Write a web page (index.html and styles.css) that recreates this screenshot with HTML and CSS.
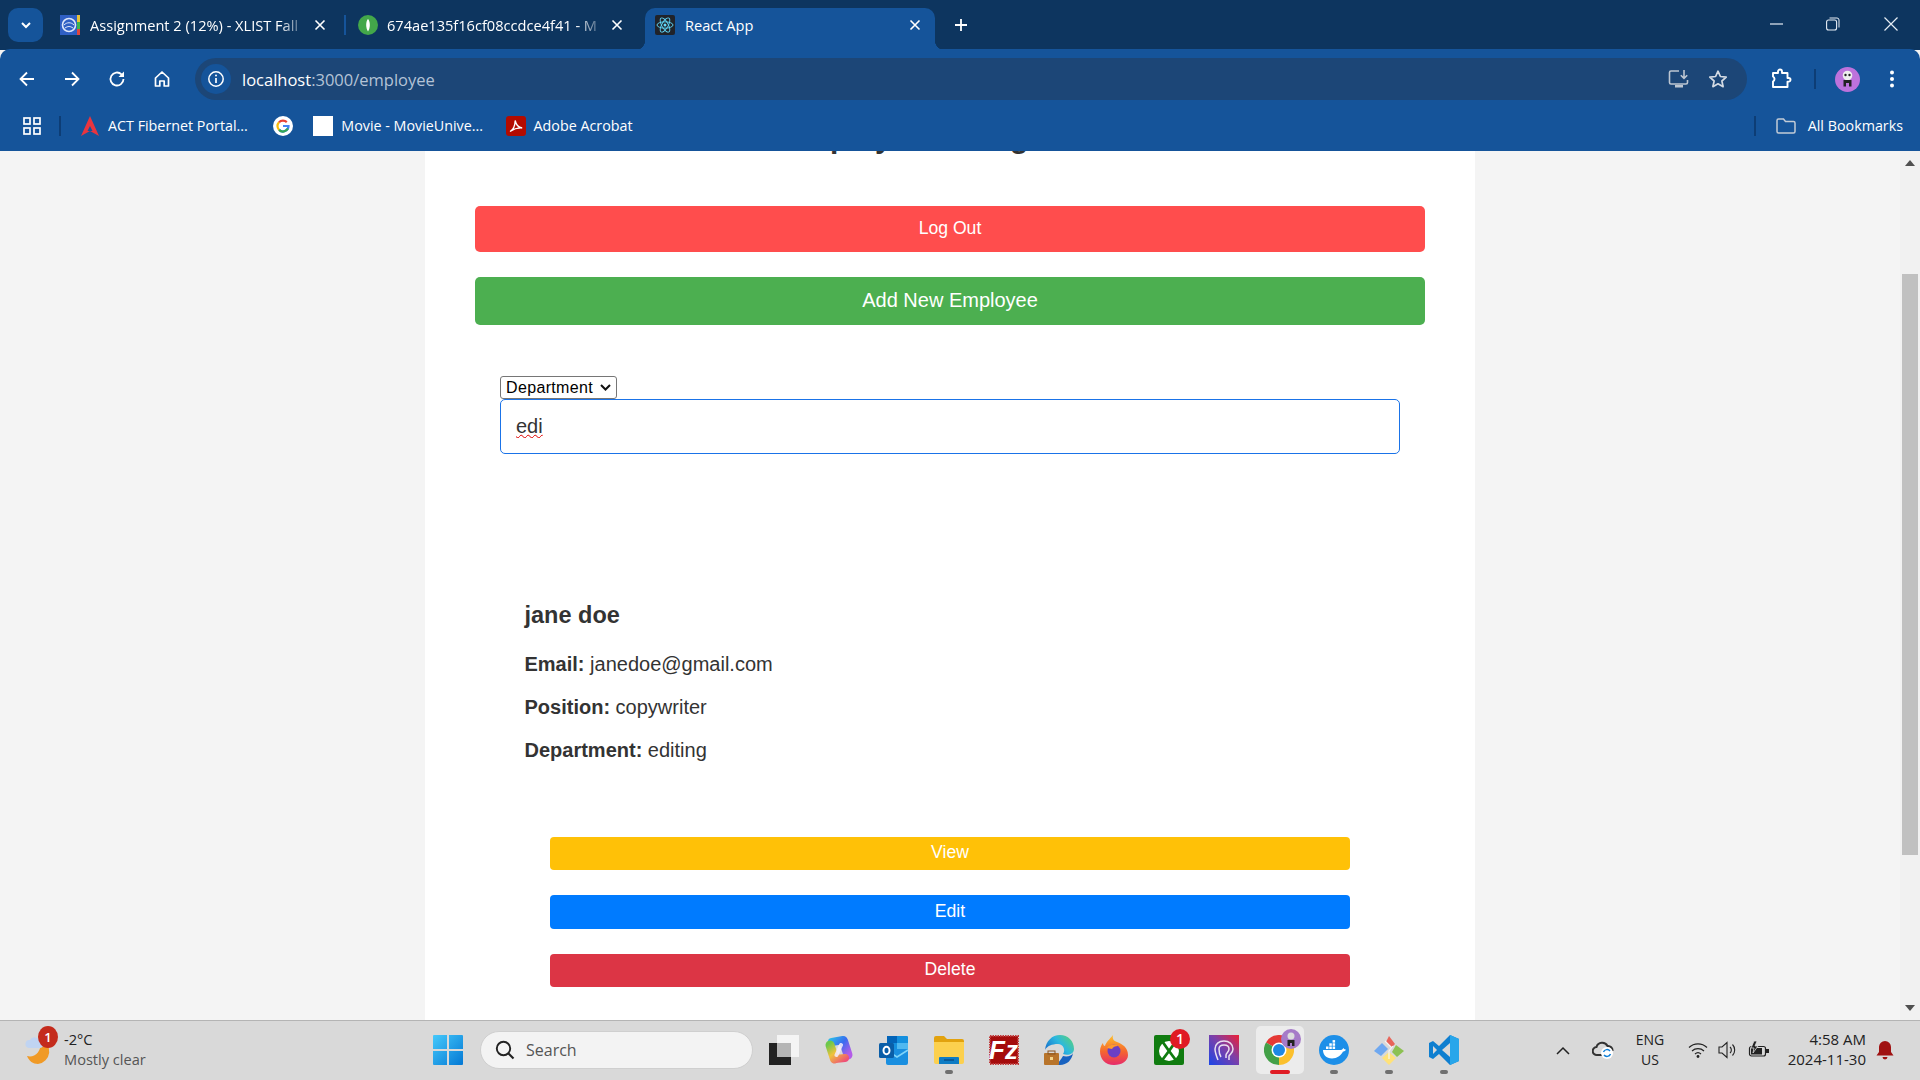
FILE: index.html
```html
<!DOCTYPE html>
<html lang="en">
<head>
    <meta charset="UTF-8">
    <meta name="viewport" content="width=device-width, initial-scale=1.0">
    <title>React App</title>
    <link rel="stylesheet" href="styles.css">
</head>
<body>
    <!-- browser tabs -->
    <div class="tabstrip">
        <div class="tab-search">
            <svg width="14" height="14" viewBox="0 0 14 14"><path d="M3 5l4 4 4-4" fill="none" stroke="#fff" stroke-width="2"/></svg>
        </div>
        <div class="tab tab-first">
            <svg class="favicon" width="20" height="20" viewBox="0 0 20 20"><rect width="20" height="20" fill="#2f5fc4"/><rect x="17" width="3" height="7" fill="#e8c23a"/><rect x="17" y="7" width="3" height="7" fill="#3eb54a"/><rect x="17" y="14" width="3" height="6" fill="#e0463c"/><circle cx="9" cy="10" r="6.5" fill="none" stroke="#dfe8fa" stroke-width="1.6"/><path d="M4 10c3-3 7-3 10 0M5 13c3-2 5-2 8 0" fill="none" stroke="#dfe8fa"/></svg>
            <span class="tab-title">Assignment 2 (12%) - XLIST Fall</span>
            <svg class="tab-close" width="12" height="12" viewBox="0 0 12 12"><path d="M1.5 1.5l9 9M10.5 1.5l-9 9" stroke="#fff" stroke-width="1.6"/></svg>
        </div>
        <div class="tab-sep"></div>
        <div class="tab tab-second">
            <svg class="favicon" width="20" height="20" viewBox="0 0 20 20"><circle cx="10" cy="10" r="10" fill="#43a74a"/><path d="M10 4c2.400 2.400 2.400 9 0 12.500-2.400-3.500-2.400-10.100 0-12.500z" fill="#fff"/></svg>
            <span class="tab-title">674ae135f16cf08ccdce4f41 - M</span>
            <svg class="tab-close" width="12" height="12" viewBox="0 0 12 12"><path d="M1.500 1.500l9 9M10.500 1.500l-9 9" stroke="#fff" stroke-width="1.600"/></svg>
        </div>
        <div class="tab tab-active">
            <svg class="favicon" width="20" height="20" viewBox="0 0 20 20"><rect width="20" height="20" rx="2" fill="#20232a"/><g fill="none" stroke="#61dafb" stroke-width=".9"><ellipse cx="10" cy="10" rx="8" ry="3.200"/><ellipse cx="10" cy="10" rx="8" ry="3.200" transform="rotate(60 10 10)"/><ellipse cx="10" cy="10" rx="8" ry="3.200" transform="rotate(120 10 10)"/></g><circle cx="10" cy="10" r="1.500" fill="#61dafb"/></svg>
            <span class="tab-title">React App</span>
            <svg class="tab-close" width="12" height="12" viewBox="0 0 12 12"><path d="M1.500 1.500l9 9M10.500 1.500l-9 9" stroke="#fff" stroke-width="1.600"/></svg>
        </div>
        <svg class="new-tab" width="14" height="14" viewBox="0 0 14 14"><path d="M7 1v12M1 7h12" stroke="#fff" stroke-width="1.800"/></svg>
        <div class="window-controls">
            <svg width="14" height="14" viewBox="0 0 14 14"><path d="M0 7h13" stroke="#e6edf5" stroke-width="1.200"/></svg>
            <svg width="14" height="14" viewBox="0 0 14 14"><rect x=".6" y="3" width="10" height="10" rx="2" fill="none" stroke="#e6edf5" stroke-width="1.100"/><path d="M3.500 1h7.500a2 2 0 0 1 2 2v7.500" fill="none" stroke="#e6edf5"/></svg>
            <svg width="14" height="14" viewBox="0 0 14 14"><path d="M.5.5l13 13M13.500.5l-13 13" stroke="#e6edf5" stroke-width="1.200"/></svg>
        </div>
    </div>

    <!-- address bar -->
    <div class="toolbar">
        <svg class="nav-icon" width="18" height="18" viewBox="0 0 18 18"><path d="M16 9H3M9 2.500L2.500 9 9 15.500" fill="none" stroke="#fff" stroke-width="1.800"/></svg>
        <svg class="nav-icon" width="18" height="18" viewBox="0 0 18 18"><path d="M2 9h13M9 2.500L15.500 9 9 15.500" fill="none" stroke="#fff" stroke-width="1.800"/></svg>
        <svg class="nav-icon" width="18" height="18" viewBox="0 0 18 18"><path d="M15.500 9a6.500 6.500 0 1 1-2-4.700L15.500 6.300" fill="none" stroke="#fff" stroke-width="1.800"/><path d="M16 1.500V7h-5.500z" fill="#fff"/></svg>
        <svg class="nav-icon" width="18" height="18" viewBox="0 0 18 18"><path d="M2.500 8L9 2l6.500 6v8h-4.300v-5H6.800v5H2.500z" fill="none" stroke="#fff" stroke-width="1.700" stroke-linejoin="round"/></svg>
        <div class="address-bar">
            <div class="site-info">
                <svg width="18" height="18" viewBox="0 0 18 18"><circle cx="9" cy="9" r="7.200" fill="none" stroke="#fff" stroke-width="1.500"/><path d="M9 8v5" stroke="#fff" stroke-width="1.700"/><circle cx="9" cy="5.500" r="1" fill="#fff"/></svg>
            </div>
            <span class="url">localhost<span class="url-path">:3000/employee</span></span>
            <svg class="install-icon" width="22" height="20" viewBox="0 0 22 20"><path d="M11 2H3a1.500 1.500 0 0 0-1.500 1.500v10A1.500 1.500 0 0 0 3 15h15a1.500 1.500 0 0 0 1.500-1.500V11" fill="none" stroke="#bcc6d2" stroke-width="1.600"/><path d="M7 16h8v2.500H7z" fill="#bcc6d2"/><path d="M16 1v8M12.800 6.200L16 9.400l3.200-3.200" fill="none" stroke="#bcc6d2" stroke-width="1.600"/></svg>
            <svg class="star-icon" width="20" height="20" viewBox="0 0 20 20"><path d="M10 2.200l2.400 5.300 5.800.6-4.300 3.900 1.200 5.700-5.100-2.900-5.100 2.900 1.200-5.700L1.800 8.100l5.800-.6z" fill="none" stroke="#d4dbe4" stroke-width="1.700" stroke-linejoin="round"/></svg>
        </div>
        <svg class="ext-icon" width="22" height="22" viewBox="0 0 22 22"><path d="M3 5h5V3.500a2 2 0 0 1 4 0V5h5.500v5h1.200a1.800 1.800 0 0 1 0 3.600h-1.200V19H3v-5.500a3 3 0 0 0 1.500-2.600A3 3 0 0 0 3 8.500z" fill="none" stroke="#fff" stroke-width="1.900" stroke-linejoin="round"/></svg>
        <div class="toolbar-sep"></div>
        <div class="avatar">
            <svg width="25" height="25" viewBox="0 0 25 25"><circle cx="12.500" cy="12.500" r="12.500" fill="#bd72dc"/><circle cx="12.500" cy="8.500" r="4.800" fill="#eee"/><circle cx="10.500" cy="8" r="1.200" fill="#222"/><circle cx="14.500" cy="8" r="1.200" fill="#222"/><path d="M8.500 13h8v6.500h-2.500v-3.500h-3v3.500H8.500z" fill="#222"/></svg>
        </div>
        <svg class="kebab" width="6" height="18" viewBox="0 0 6 18"><circle cx="3" cy="2.500" r="2" fill="#fff"/><circle cx="3" cy="9" r="2" fill="#fff"/><circle cx="3" cy="15.500" r="2" fill="#fff"/></svg>
    </div>

    <!-- bookmarks -->
    <div class="bookmarks">
        <svg class="apps-icon" width="18" height="18" viewBox="0 0 18 18"><g fill="none" stroke="#fff" stroke-width="1.700"><rect x="1" y="1" width="6" height="6"/><rect x="11" y="1" width="6" height="6"/><rect x="1" y="11" width="6" height="6"/><rect x="11" y="11" width="6" height="6"/></g></svg>
        <div class="bookmark-sep"></div>
        <div class="bookmark bookmark-act">
            <svg width="20" height="20" viewBox="0 0 20 20"><path d="M10 0l9 20-9-5-9 5z" fill="#e8353f"/><path d="M10 10l2.500 5h-5z" fill="#15549a"/></svg>
            <span>ACT Fibernet Portal...</span>
        </div>
        <svg class="google-icon" width="20" height="20" viewBox="0 0 20 20"><circle cx="10" cy="10" r="10" fill="#fff"/><path d="M10 10h5.500a5.500 5.500 0 0 1-9.400 3.900" fill="none" stroke="#4285f4" stroke-width="2.200"/><path d="M6.100 13.900a5.500 5.500 0 0 1-.1-7.700" fill="none" stroke="#fbbc05" stroke-width="2.200"/><path d="M6 6.200a5.500 5.500 0 0 1 7.800-.1" fill="none" stroke="#ea4335" stroke-width="2.200"/><path d="M14.900 12.500a5.500 5.500 0 0 1-8.800 1.400" fill="none" stroke="#34a853" stroke-width="2.200"/></svg>
        <div class="bookmark bookmark-movie">
            <div class="blank-favicon"></div>
            <span>Movie - MovieUnive...</span>
        </div>
        <div class="bookmark bookmark-adobe">
            <svg width="20" height="20" viewBox="0 0 20 20"><rect width="20" height="20" rx="3" fill="#b30b00"/><path d="M4 15.500c3-1.500 5-6 5.200-11 .8 4 3 7 7 7.500-4.500-.3-8.500 1-12.200 3.500z" fill="none" stroke="#fff" stroke-width="1.300"/></svg>
            <span>Adobe Acrobat</span>
        </div>
        <div class="bookmark-sep bookmark-sep-right"></div>
        <div class="bookmark bookmark-all">
            <svg width="20" height="16" viewBox="0 0 20 16"><path d="M1 2.500A1.500 1.500 0 0 1 2.500 1h5l2 2.500h8A1.500 1.500 0 0 1 19 5v8.500a1.500 1.500 0 0 1-1.500 1.500h-15A1.500 1.500 0 0 1 1 13.500z" fill="none" stroke="#c2cbd6" stroke-width="1.500"/></svg>
            <span>All Bookmarks</span>
        </div>
    </div>

    <!-- page -->
    <div class="viewport">
        <div class="page">
            <div class="panel">
                <h1>Employee Management</h1>
                <button class="btn-logout">Log Out</button>
                <button class="btn-add">Add New Employee</button>
                <div class="search-box">
                    <div class="select-wrap">
                        <select class="search-field">
                            <option>Department</option>
                            <option>Position</option>
                        </select>
                        <svg class="select-arrow" width="11" height="7" viewBox="0 0 11 7"><path d="M1 1l4.500 4.500L10 1" fill="none" stroke="#111" stroke-width="2"/></svg>
                    </div>
                    <input class="search-input" type="text" value="edi">
                </div>
                <div class="employee-card">
                    <h3>jane doe</h3>
                    <p><strong>Email:</strong> janedoe@gmail.com</p>
                    <p><strong>Position:</strong> copywriter</p>
                    <p><strong>Department:</strong> editing</p>
                </div>
                <div class="card-actions">
                    <button class="btn-view">View</button>
                    <button class="btn-edit">Edit</button>
                    <button class="btn-delete">Delete</button>
                </div>
            </div>
        </div>
        <div class="scrollbar">
            <svg width="10" height="6" viewBox="0 0 10 6"><path d="M5 0l5 6H0z" fill="#505050"/></svg>
            <div class="scroll-track"><div class="scroll-thumb"></div></div>
            <svg width="10" height="6" viewBox="0 0 10 6"><path d="M0 0h10L5 6z" fill="#505050"/></svg>
        </div>
    </div>

    <!-- windows taskbar -->
    <div class="taskbar">
        <div class="weather">
            <div class="weather-icon">
                <svg width="30" height="36" viewBox="0 0 30 36"><path d="M16 8a13 13 0 0 1-3 25C8 33 4 30 2 25c6 2 15-2 14-17z" fill="#f09a26"/><path d="M4 17a4 4 0 0 1 1-8 5 5 0 0 1 9 0 4 4 0 0 1 1 8z" fill="#c0d4f2"/></svg>
                <span class="weather-badge">1</span>
            </div>
            <div class="weather-text">
                <span>-2°C</span>
                <span class="weather-desc">Mostly clear</span>
            </div>
        </div>
        <svg class="win-logo" width="30" height="30" viewBox="0 0 30 30"><defs><linearGradient id="winGrad" x1="0" y1="0" x2="1" y2="1"><stop offset="0" stop-color="#45c9fb"/><stop offset="1" stop-color="#0478d4"/></linearGradient></defs><path d="M0 1a1 1 0 0 1 1-1h13v14H0zM16 0h13a1 1 0 0 1 1 1v13H16zM0 16h14v14H1a1 1 0 0 1-1-1zM16 16h14v13a1 1 0 0 1-1 1H16z" fill="url(#winGrad)"/></svg>
        <div class="task-search">
            <svg width="20" height="20" viewBox="0 0 20 20"><circle cx="8.500" cy="8.500" r="6.700" fill="none" stroke="#222" stroke-width="1.900"/><path d="M13.500 13.500l5 5" stroke="#222" stroke-width="2.200"/></svg>
            <span>Search</span>
        </div>
        <div class="task-icons">
            <div class="task-item">
                <svg width="30" height="30" viewBox="0 0 30 30"><rect x="0" y="8" width="22" height="22" fill="#222"/><rect x="8" y="0" width="22" height="22" fill="#f4f4f4"/><rect x="8" y="8" width="14" height="14" fill="#b5b5b5"/></svg>
            </div>
            <div class="task-item">
                <svg width="30" height="30" viewBox="0 0 30 30"><defs><linearGradient id="copA" gradientUnits="userSpaceOnUse" x1="6" y1="4" x2="24" y2="20"><stop offset="0" stop-color="#2bb8e8"/><stop offset=".5" stop-color="#3a6cf0"/><stop offset="1" stop-color="#b45ce8"/></linearGradient><linearGradient id="copB" gradientUnits="userSpaceOnUse" x1="6" y1="8" x2="20" y2="27"><stop offset="0" stop-color="#6cc84b"/><stop offset=".45" stop-color="#f0c23c"/><stop offset="1" stop-color="#ee4f78"/></linearGradient></defs><path d="M8 7L19 5" stroke="url(#copA)" stroke-width="8" stroke-linecap="round"/><path d="M19.500 6L24 20" stroke="url(#copA)" stroke-width="9" stroke-linecap="round"/><path d="M6 10l4.500 14" stroke="url(#copB)" stroke-width="9" stroke-linecap="round"/><path d="M11 24l10-1" stroke="url(#copB)" stroke-width="8" stroke-linecap="round"/><path d="M12.500 20L17 10" stroke="#f6eefc" stroke-width="4" stroke-linecap="round" opacity=".85"/></svg>
            </div>
            <div class="task-item">
                <svg width="30" height="30" viewBox="0 0 30 30"><path d="M8 1h20a1 1 0 0 1 1 1v12H8z" fill="#1490df"/><path d="M8 1h10v7H8z" fill="#0364b8"/><path d="M18 8h11v7H18z" fill="#50b8f0"/><path d="M7 14h22v14a2 2 0 0 1-2 2H9a2 2 0 0 1-2-2z" fill="#1a8fe0"/><path d="M7 15l11 7 11-7" fill="none" stroke="#7fd4fa" stroke-width="1.500"/><rect x="0" y="8" width="15" height="15" rx="1.500" fill="#0a5ea8"/><ellipse cx="7.500" cy="15.500" rx="3" ry="3.800" fill="none" stroke="#fff" stroke-width="2"/></svg>
            </div>
            <div class="task-item task-running">
                <svg width="30" height="30" viewBox="0 0 30 30"><path d="M0 3a2 2 0 0 1 2-2h8l3 3h15a2 2 0 0 1 2 2v4H0z" fill="#e2a20e"/><path d="M0 7h30v20a2 2 0 0 1-2 2H2a2 2 0 0 1-2-2z" fill="#fcd04e"/><path d="M5 29v-6a1 1 0 0 1 1-1h18a1 1 0 0 1 1 1v6z" fill="#0f7cc4"/><path d="M10 25h10" stroke="#0a4f8a" stroke-width="1.500"/></svg>
            </div>
            <div class="task-item">
                <svg width="30" height="30" viewBox="0 0 30 30"><rect x="1" y="1" width="28" height="28" fill="#a50c0c" stroke="#bf3a3a" stroke-width="2" stroke-dasharray="1.500 1"/><text x="14.500" y="24" text-anchor="middle" class="fz-text">Fz</text></svg>
            </div>
            <div class="task-item">
                <svg width="30" height="30" viewBox="0 0 30 30"><defs><linearGradient id="edgeGrad" x1="1" y1=".2" x2="0" y2=".8"><stop offset="0" stop-color="#58d07c"/><stop offset=".45" stop-color="#2cb8e0"/><stop offset="1" stop-color="#1668c8"/></linearGradient></defs><path d="M1 15C2 6 8 0 16 0c8 0 14 6 14 14 0 5-6 7-11 5 3-4 0-10-5-10C8 9 3 11 1 15z" fill="url(#edgeGrad)"/><path d="M19 21c4 1 9 0 10-3-1 7-6 12-13 12-1 0-3 0-4-1 3-1 5-5 7-8z" fill="#1862c0"/><rect x="0" y="18" width="15" height="12" rx="1" fill="#b8742a"/><rect x="4" y="16" width="7" height="3" fill="none" stroke="#8a5520"/><rect x="6" y="22" width="3" height="3" fill="#f5d48a"/></svg>
            </div>
            <div class="task-item">
                <svg width="30" height="30" viewBox="0 0 30 30"><defs><linearGradient id="foxGrad" x1="0" y1="0" x2="0" y2="1"><stop offset="0" stop-color="#ffc22b"/><stop offset=".55" stop-color="#f5662f"/><stop offset="1" stop-color="#e62a6c"/></linearGradient></defs><path d="M15 30C6 30 1 24 1 16c0-4 2-7 3-8 0 2 1 3 2 3 1-4 5-7 8-11-1 4 1 6 4 7 5 2 11 5 11 13 0 6-6 10-14 10z" fill="url(#foxGrad)"/><circle cx="15" cy="16" r="6.500" fill="#6b3fc4"/><path d="M8 13c2-3 8-5 11-2-3 0-5 1-6 3z" fill="#ff9a2e"/></svg>
            </div>
            <div class="task-item">
                <svg width="30" height="30" viewBox="0 0 30 30"><rect width="30" height="30" rx="2" fill="#107c10"/><circle cx="15" cy="16" r="10" fill="#fff"/><path d="M15 16L8 6M15 16l7-10M15 16L6 28M15 16l9 12" stroke="#107c10" stroke-width="2.800"/></svg>
                <span class="task-badge">1</span>
            </div>
            <div class="task-item">
                <svg width="30" height="30" viewBox="0 0 30 30"><defs><linearGradient id="purpGrad" x1="0" y1="1" x2="1" y2="0"><stop offset="0" stop-color="#1a45e8"/><stop offset=".55" stop-color="#7d3fa8"/><stop offset="1" stop-color="#ee1f35"/></linearGradient></defs><rect width="30" height="30" fill="url(#purpGrad)"/><path d="M9 25c-2-5-3-8-3-11 0-5 4-8 9-8s9 3 9 8c0 4-3 5-4 7v4M12 22c-2-3-2-6-2-8 0-3 2-4 5-4s5 1 5 4-3 4-3 6v3" fill="none" stroke="#e9dff0" stroke-width="1.500"/></svg>
            </div>
            <div class="task-item task-chrome">
                <svg width="30" height="30" viewBox="0 0 30 30"><path d="M15 15L2 7.500A15 15 0 0 1 28 7.500z" fill="#e53935"/><path d="M15 15L28 7.500A15 15 0 0 1 15 30z" fill="#fbc02d"/><path d="M15 15V30A15 15 0 0 1 2 7.500z" fill="#43a047"/><circle cx="15" cy="15" r="7.500" fill="#fff"/><circle cx="15" cy="15" r="6" fill="#1e88e5"/></svg>
                <svg class="chrome-profile" width="20" height="20" viewBox="0 0 20 20"><circle cx="10" cy="10" r="10" fill="#a67bc8"/><circle cx="10" cy="7" r="3.500" fill="#ddd"/><path d="M6.500 11h7v6h-2.500v-3H9v3H6.500z" fill="#222"/></svg>
            </div>
            <div class="task-item task-running">
                <svg width="30" height="30" viewBox="0 0 30 30"><circle cx="15" cy="15" r="15" fill="#1d8fe8"/><path d="M4 15h18c1 0 2-1.500 2.500-2 .5 1 1.500 1.500 2.500 1.500-.5 1.500-2 2-3 2-2 4-6 7-11 7-6 0-9-4-9-8.500z" fill="#fff"/><g fill="#fff"><rect x="7" y="11.500" width="2.500" height="2.500"/><rect x="10.300" y="11.500" width="2.500" height="2.500"/><rect x="13.600" y="11.500" width="2.500" height="2.500"/><rect x="10.300" y="8.300" width="2.500" height="2.500"/><rect x="13.600" y="8.300" width="2.500" height="2.500"/><rect x="13.600" y="5.100" width="2.500" height="2.500"/></g></svg>
            </div>
            <div class="task-item task-running">
                <svg width="30" height="30" viewBox="0 0 30 30"><path d="M15 1l6 8-3.500 3.500L14 9l-2-2z" fill="#e8655a"/><path d="M22 10l8 6-7 6-5-5z" fill="#8cc152"/><path d="M8 8l6 6-7 7-7-5z" fill="#6fa8f0"/><path d="M15 17l7 6-7 7-7-7z" fill="#ffe27a"/><path d="M11 6l7 7M19 11l-4 5v8" fill="none" stroke="#f5f5f5" stroke-width="1.200"/></svg>
            </div>
            <div class="task-item task-running">
                <svg width="30" height="30" viewBox="0 0 30 30"><path d="M21 0l9 4v22l-9 4-11-11-6 5-4-2V8l4-2 6 5z" fill="#0f7fd0"/><path d="M21 0l9 4v22l-9 4z" fill="#28a6ea"/><path d="M21 8v14l-8-7z" fill="#d9d9d9"/><path d="M4 11l4 4-4 4z" fill="#d9d9d9"/></svg>
            </div>
        </div>
        <div class="tray">
            <svg class="tray-chevron" width="14" height="9" viewBox="0 0 14 9"><path d="M1 8l6-6 6 6" fill="none" stroke="#222" stroke-width="1.500"/></svg>
            <div class="tray-cloud">
                <svg width="22" height="18" viewBox="0 0 22 18"><path d="M5 14a4 4 0 0 1-.5-8 6 6 0 0 1 11-1 4.500 4.500 0 0 1 5 5" fill="none" stroke="#333" stroke-width="2"/><path d="M5 14h7" stroke="#333" stroke-width="2"/><circle cx="15" cy="12" r="6" fill="#fff"/><path d="M11.500 11a3.800 3.800 0 0 1 6.500-1M18.500 13a3.800 3.800 0 0 1-6.500 1" fill="none" stroke="#0f7fd8" stroke-width="1.500"/></svg>
            </div>
            <div class="tray-lang"><span>ENG</span><span>US</span></div>
            <svg class="tray-wifi" width="20" height="16" viewBox="0 0 20 16"><path d="M1 5.500a13 13 0 0 1 18 0M4 9a9 9 0 0 1 12 0M7 12a4.500 4.500 0 0 1 6 0" fill="none" stroke="#222" stroke-width="1.200"/><circle cx="10" cy="14.500" r="1.400" fill="#222"/></svg>
            <svg class="tray-sound" width="20" height="18" viewBox="0 0 20 18"><path d="M1 6h3l5-4.500v15L4 12H1z" fill="none" stroke="#222" stroke-width="1.100"/><path d="M12 6a4 4 0 0 1 0 6M14.500 3.500a8 8 0 0 1 0 11" fill="none" stroke="#222" stroke-width="1.100"/></svg>
            <svg class="tray-battery" width="21" height="18" viewBox="0 0 21 18"><rect x="1.500" y="5.500" width="16" height="9.500" rx="2" fill="none" stroke="#222" stroke-width="1.200"/><rect x="3" y="7" width="11" height="6.500" fill="#222"/><rect x="18" y="8" width="3" height="4" fill="#222"/><path d="M6 0L3 7h3l-1 5 5-7H7l2-5z" fill="#222" stroke="#d9d9d9" stroke-width=".8"/></svg>
            <div class="tray-clock"><span>4:58 AM</span><span>2024-11-30</span></div>
            <svg class="tray-bell" width="18" height="20" viewBox="0 0 18 20"><path d="M9 1a6 6 0 0 1 6 6v5l2.500 3.500H.5L3 12V7a6 6 0 0 1 6-6z" fill="#a01212"/><path d="M6.500 17h5a2.500 2.500 0 0 1-5 0z" fill="#a01212"/></svg>
        </div>
    </div>
</body>
</html>
```

FILE: styles.css
```css
* {
    box-sizing: border-box;
}
body {
    margin: 0;
    width: 1920px;
    height: 1080px;
    overflow: hidden;
    display: flex;
    flex-direction: column;
    font-family: "Liberation Sans", Arial, sans-serif;
    background: #f4f4f4;
}

/* tabs */
.tabstrip {
    height: 50px;
    flex-shrink: 0;
    display: flex;
    align-items: flex-end;
    background: #0d355f;
    font-family: "Open Sans", sans-serif;
    font-size: 14.6px;
    color: #fff;
}
.tab-search {
    width: 35px;
    height: 34px;
    margin: 0 4px 8px 8px;
    border-radius: 10px;
    background: #15549a;
    display: flex;
    align-items: center;
    justify-content: center;
}
.tab {
    height: 42px;
    display: flex;
    align-items: center;
    position: relative;
}
.tab-first {
    width: 297px;
    padding: 0 18px 8px 13px;
}
.tab-second {
    width: 299px;
    padding: 0 22px 8px 12px;
}
.tab-active {
    width: 290px;
    padding: 0 14px 8px 10px;
    background: #15549a;
    border-radius: 10px 10px 0 0;
}
.tab-active::before,
.tab-active::after {
    content: "";
    position: absolute;
    bottom: 0;
    width: 10px;
    height: 10px;
}
.tab-active::before {
    left: -10px;
    background: radial-gradient(circle at 0 0, transparent 10px, #15549a 10.5px);
}
.tab-active::after {
    right: -10px;
    background: radial-gradient(circle at 100% 0, transparent 10px, #15549a 10.5px);
}
.favicon {
    flex-shrink: 0;
    margin-right: 10px;
}
.tab-second .favicon {
    margin-right: 9px;
}
.tab-title {
    flex: 1;
    overflow: hidden;
    white-space: nowrap;
    -webkit-mask-image: linear-gradient(to right, #000 90%, rgba(0,0,0,0.25) 100%);
    mask-image: linear-gradient(to right, #000 90%, rgba(0,0,0,0.25) 100%);
}
.tab-active .tab-title {
    -webkit-mask-image: none;
    mask-image: none;
}
.tab-close {
    flex-shrink: 0;
    margin-left: 13px;
}
.tab-sep {
    width: 2px;
    height: 20px;
    margin-bottom: 15px;
    background: #15549a;
}
.new-tab {
    margin: 0 0 18px 19px;
}
.window-controls {
    margin-left: auto;
    display: flex;
    gap: 44px;
    padding: 0 22px 19px 0;
}
.window-controls svg:first-child {
    margin-right: -2px;
}

/* toolbar */
.toolbar {
    height: 51px;
    flex-shrink: 0;
    display: flex;
    align-items: center;
    padding: 9px 20px 0 18px;
    background: #15549a;
    margin-top: -1px;
    border-radius: 10px 10px 0 0;
    position: relative;
}
.nav-icon {
    margin-right: 27px;
}
.nav-icon:nth-child(4) {
    margin-right: 24px;
}
.address-bar {
    width: 1552px;
    height: 42px;
    border-radius: 21px;
    background: #1c4677;
    display: flex;
    align-items: center;
    padding-left: 6px;
}
.site-info {
    width: 30px;
    height: 30px;
    border-radius: 50%;
    background: #15549a;
    display: flex;
    align-items: center;
    justify-content: center;
}
.url {
    margin-left: 11px;
    font-family: "Open Sans", sans-serif;
    font-size: 16.5px;
    color: #fff;
}
.url-path {
    color: #b4c3d6;
}
.install-icon {
    margin-left: auto;
}
.star-icon {
    margin: 0 19px 0 18px;
}
.ext-icon {
    margin-left: 23px;
}
.toolbar-sep {
    width: 2px;
    height: 20px;
    background: #0d3d75;
    margin: 0 19px 0 22px;
}
.avatar {
    width: 25px;
    height: 25px;
}
.kebab {
    margin-left: 29px;
}

/* bookmarks */
.bookmarks {
    height: 51px;
    flex-shrink: 0;
    display: flex;
    align-items: center;
    padding-left: 23px;
    background: #15549a;
    font-family: "Open Sans", sans-serif;
    font-size: 14.3px;
    color: #fff;
}
.bookmark {
    display: flex;
    align-items: center;
    gap: 8px;
    white-space: nowrap;
}
.bookmark-sep {
    width: 2px;
    height: 20px;
    background: #0d3d75;
    margin: 0 19px 0 18px;
}
.bookmark-sep-right {
    margin: 0 20px 0 auto;
}
.google-icon {
    margin: 0 20px 0 25.5px;
}
.blank-favicon {
    width: 20px;
    height: 20px;
    background: #fff;
}
.bookmark-adobe {
    margin-left: 22.5px;
}
.bookmark-all {
    gap: 12px;
    padding-right: 17px;
}

/* page */
.viewport {
    flex: 1;
    min-height: 0;
    display: flex;
    overflow: hidden;
}
.page {
    flex: 1;
    min-width: 0;
    display: flex;
    justify-content: center;
    overflow: hidden;
}
.panel {
    width: 1050px;
    padding: 0 50px;
    background: white;
    color: #333;
}
h1 {
    margin: -30px 0 51px;
    font-size: 30px;
    line-height: 34px;
    text-align: center;
}
button {
    display: block;
    width: 100%;
    border: none;
    padding: 0 0 2px;
    color: white;
    cursor: pointer;
    font-family: inherit;
}
.btn-logout {
    height: 46px;
    font-size: 17.6px;
    background: #ff4d4d;
    border-radius: 5px;
}
.btn-add {
    height: 48px;
    margin-top: 25px;
    font-size: 20px;
    background: #4caf50;
    border-radius: 5px;
}
.search-box {
    padding: 51px 25px 0;
}
.select-wrap {
    width: 117px;
    height: 23px;
    position: relative;
}
.search-field {
    display: block;
    width: 100%;
    height: 100%;
    padding: 0 0 0 5px;
    appearance: none;
    border: 1px solid #767676;
    border-radius: 3px;
    font-family: inherit;
    font-size: 16px;
    letter-spacing: .35px;
    color: #000;
    background: #fff;
}
.select-arrow {
    position: absolute;
    top: 8px;
    right: 6px;
    pointer-events: none;
}
.search-input {
    display: block;
    width: 100%;
    height: 55px;
    padding: 0 15px;
    border: 1px solid #1a73e8;
    border-radius: 5px;
    font-family: inherit;
    font-size: 20px;
    color: #333;
    outline: none;
    text-decoration: underline wavy #e00000;
    text-decoration-thickness: 1px;
}
.employee-card {
    padding: 147px 0 0 49.5px;
}
.employee-card h3 {
    margin: 0 0 24px;
    font-size: 23.5px;
    line-height: 28px;
}
.employee-card p {
    margin: 0 0 20px;
    font-size: 20px;
    line-height: 23px;
}
.card-actions {
    padding: 54.75px 75px 0;
    display: flex;
    flex-direction: column;
    gap: 25px;
}
.card-actions button {
    height: 33.5px;
    font-size: 17.6px;
    border-radius: 4px;
}
.btn-view {
    background: #ffc107;
}
.btn-edit {
    background: #007bff;
}
.btn-delete {
    background: #dc3545;
}

/* scrollbar */
.scrollbar {
    width: 20px;
    flex-shrink: 0;
    display: flex;
    flex-direction: column;
    align-items: center;
    padding: 9px 0;
    background: #f1f1f1;
}
.scroll-track {
    flex: 1;
    width: 100%;
    padding: 108px 2px 0;
}
.scroll-thumb {
    height: 581px;
    background: #c0c0c0;
}

/* taskbar */
.taskbar {
    height: 60px;
    flex-shrink: 0;
    display: flex;
    align-items: center;
    padding-bottom: 1px;
    background: #d9d9d9;
    border-top: 1px solid #b4b4b4;
    font-family: "Open Sans", sans-serif;
    color: #222;
}
.weather {
    width: 433px;
    padding-left: 25px;
    display: flex;
    align-items: center;
    gap: 12px;
}
.weather-icon {
    width: 27px;
    height: 38px;
    position: relative;
}
.weather-badge {
    position: absolute;
    top: -5px;
    right: -6px;
    width: 20px;
    height: 22px;
    border-radius: 50%;
    background: #c42b1c;
    color: #fff;
    font-size: 13px;
    font-weight: 600;
    text-align: center;
    line-height: 22px;
}
.weather-text {
    display: flex;
    flex-direction: column;
    margin-top: -2px;
    font-size: 14.6px;
    line-height: 20px;
}
.weather-desc {
    color: #555;
}
.win-logo {
    flex-shrink: 0;
}
.task-search {
    width: 273px;
    height: 38px;
    margin-left: 17px;
    padding-left: 14px;
    display: flex;
    align-items: center;
    gap: 11px;
    border-radius: 19px;
    background: #f3f3f3;
    border: 1px solid #cfcfcf;
    font-size: 16px;
    color: #555;
}
.task-icons {
    display: flex;
    align-items: center;
    margin-left: 16px;
    gap: 25px;
}
.task-item {
    width: 30px;
    height: 30px;
    position: relative;
}
.task-item svg {
    display: block;
}
.task-running::after {
    content: "";
    position: absolute;
    left: 11px;
    bottom: -9px;
    width: 8px;
    height: 4px;
    border-radius: 2px;
    background: #707070;
}
.task-badge {
    position: absolute;
    top: -6px;
    right: -6px;
    width: 20px;
    height: 20px;
    border-radius: 50%;
    background: #e01b24;
    color: #fff;
    font-size: 14px;
    font-weight: 600;
    text-align: center;
    line-height: 20px;
}
.fz-text {
    font-family: "Liberation Sans", sans-serif;
    font-size: 26px;
    font-weight: bold;
    font-style: italic;
    fill: #fff;
}
.task-chrome::before {
    content: "";
    position: absolute;
    left: -8px;
    top: -9px;
    width: 48px;
    height: 48px;
    border-radius: 5px;
    background: #ececec;
}
.task-chrome::after {
    content: "";
    position: absolute;
    left: 6px;
    bottom: -9px;
    width: 20px;
    height: 4px;
    border-radius: 2px;
    background: #e01b24;
}
.task-chrome svg {
    position: relative;
}
.chrome-profile {
    position: absolute !important;
    top: -6px;
    left: 17px;
}
.tray {
    margin-left: auto;
    display: flex;
    align-items: center;
}
.tray-chevron {
    margin-right: 22px;
}
.tray-cloud {
    width: 22px;
    height: 18px;
    margin-right: 14px;
}
.tray-lang {
    width: 44px;
    margin-right: 16px;
    display: flex;
    flex-direction: column;
    align-items: center;
    font-size: 14px;
    line-height: 20px;
}
.tray-wifi {
    margin-right: 10px;
}
.tray-sound {
    margin-right: 10px;
}
.tray-clock {
    width: 97px;
    margin-top: -2px;
    display: flex;
    flex-direction: column;
    align-items: flex-end;
    font-size: 15px;
    line-height: 20px;
}
.tray-bell {
    margin: 0 26px 0 10px;
}
```
